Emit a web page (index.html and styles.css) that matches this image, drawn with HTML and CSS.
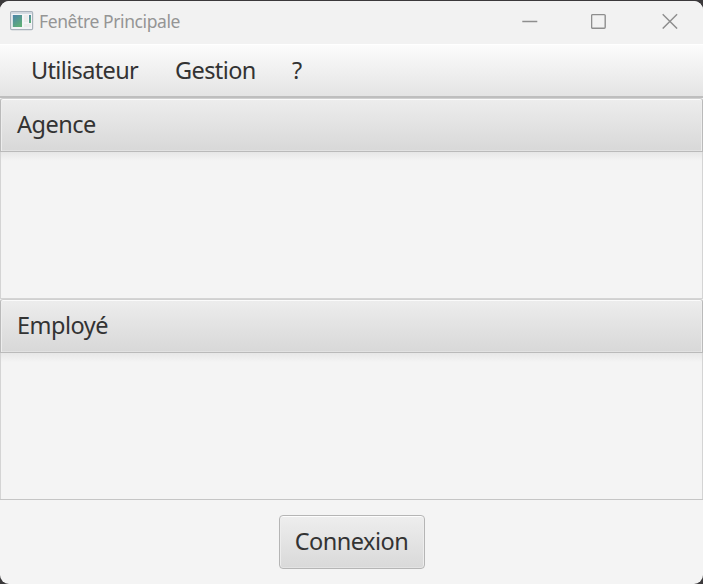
FILE: index.html
```html
<!DOCTYPE html>
<html lang="fr">
<head>
<meta charset="utf-8">
<title>Fenêtre Principale</title>
<link rel="stylesheet" href="styles.css">
</head>
<body>
<div class="window">
  <header class="titlebar">
    <svg class="app-icon" width="24" height="20" viewBox="0 0 24 20">
      <defs>
        <linearGradient id="pane" x1="0" y1="0" x2="0.6" y2="1">
          <stop offset="0" stop-color="#4c83ab"/><stop offset="1" stop-color="#5fae78"/>
        </linearGradient>
      </defs>
      <rect x="0.6" y="0.6" width="22" height="18" rx="1.2" fill="#f4f5f7" stroke="#a9b2bb" stroke-width="1.2"/>
      <path d="M1.2 2h21" stroke="#cbd3dc" stroke-width="1.6"/>
      <rect x="2.8" y="4" width="9.2" height="12" fill="url(#pane)"/>
      <path d="M14 4h4v7h-4zM14 13h7v3h-7z" fill="#ececec"/>
      <rect x="19" y="4" width="2" height="8" fill="url(#pane)"/>
    </svg>
    <span class="title">Fenêtre Principale</span>
    <div class="controls">
      <svg width="16" height="16" viewBox="0 0 16 16"><path d="M0.3 8.5h15"/></svg>
      <svg width="16" height="16" viewBox="0 0 16 16"><rect x="0.6" y="1.6" width="13.6" height="13.6" rx="1"/></svg>
      <svg width="16" height="16" viewBox="0 0 16 16"><path d="M0.7 1.2l14.4 14.4M15.1 1.2L0.7 15.6"/></svg>
    </div>
  </header>
  <nav class="menubar">
    <span class="menu-user">Utilisateur</span>
    <span class="menu-manage">Gestion</span>
    <span class="menu-help">?</span>
  </nav>
  <section class="pane">
    <h2><span class="agency">Agence</span></h2>
    <div class="content"></div>
  </section>
  <section class="pane">
    <h2><span class="employee">Employé</span></h2>
    <div class="content"></div>
  </section>
  <footer class="actions">
    <button type="button"><span>Connexion</span></button>
  </footer>
</div>
</body>
</html>
```
FILE: styles.css
```css
* { box-sizing: border-box; }

body {
  margin: 0;
  height: 584px;
  padding-top: 1px;
  overflow: hidden;
  background: #3b393b;
  color: #333;
  font: 23.5px/32px "Noto Sans", "Open Sans", sans-serif;
}

.window {
  display: flex;
  flex-direction: column;
  height: 583px;
  overflow: hidden;
  border-radius: 9px;
  background: #f4f4f4;
}

.titlebar {
  display: flex;
  align-items: center;
  height: 43px;
  padding: 0 25px 3px 10px;
  background: #f2f2f2;
}

.title {
  margin-left: 5px;
  color: #959595;
  font-size: 17.5px;
  letter-spacing: -0.4px;
}

.controls {
  display: grid;
  grid-template-columns: 69px 71px 16px;
  margin-left: auto;
}

.controls svg {
  fill: none;
  stroke: #8e8e8e;
  stroke-width: 1.4;
}

.menubar {
  display: flex;
  height: 54px;
  padding: 9px 0 0 31px;
  border-top: 1px solid #fff;
  border-bottom: 2px solid #bebebe;
  background: linear-gradient(#fcfcfc, #e4e4e4);
}

.menubar span { white-space: nowrap; }
.menu-user { width: 144px; letter-spacing: -0.65px; }
.menu-manage { width: 117px; letter-spacing: -0.6px; }

.pane { height: 201px; }

.pane h2 {
  height: 54px;
  margin: 0;
  padding: 9px 16px;
  border: 1px solid #bababa;
  border-top-color: #d0d0d0;
  border-radius: 3px 3px 0 0;
  background: linear-gradient(#ededed, #d8d8d8);
  box-shadow: inset 0 1px #fbfbfb, inset 1px 0 #ededed, inset -1px 0 #ededed, inset 0 -1px #e2e2e2;
  font: inherit;
}

.agency, .employee, button span { letter-spacing: -0.5px; }

.content {
  height: 147px;
  border: 1px solid #d4d4d4;
  border-width: 0 1px 1px;
  background: linear-gradient(#e7e7e7, #f4f4f4 9px);
}

.actions {
  display: flex;
  flex: 1;
  align-items: flex-start;
  justify-content: center;
  margin-top: -1px;
  padding-top: 15px;
  border-top: 1px solid #c5c5c5;
}

button {
  width: 146px;
  height: 54px;
  padding: 0 0 2px;
  border: 1px solid #b5b5b5;
  border-radius: 4px;
  background: linear-gradient(#eee, #d9d9d9);
  box-shadow: inset 0 1px #fdfdfd, inset 1px 0 #ededed, inset -1px 0 #ededed, inset 0 -1px #e3e3e3;
  color: inherit;
  font: inherit;
}
```
